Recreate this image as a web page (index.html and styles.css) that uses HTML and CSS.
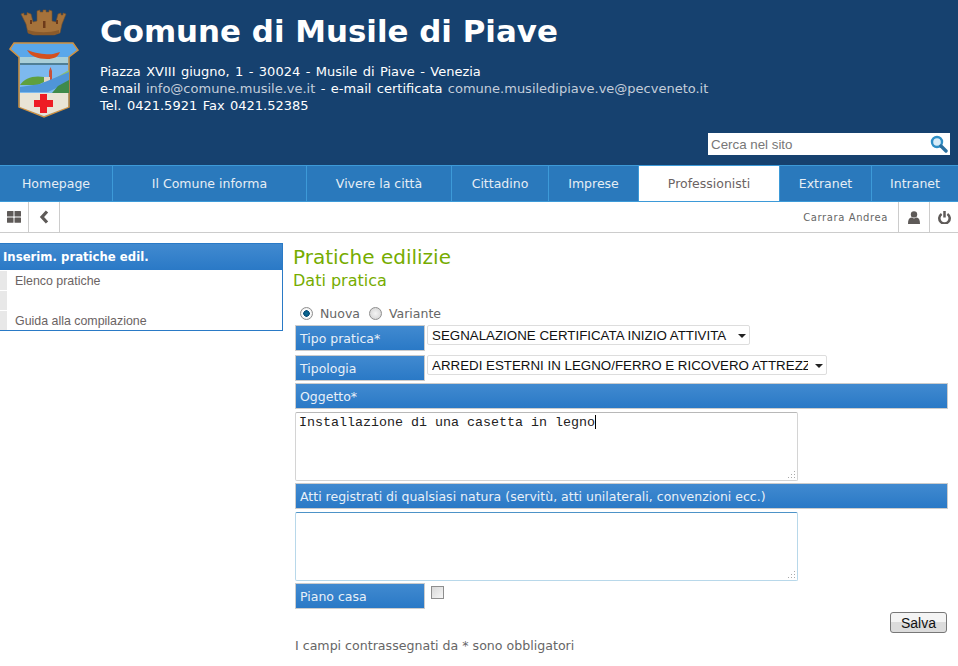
FILE: index.html
```html
<!DOCTYPE html>
<html lang="it">

<head>
  <meta charset="utf-8">
  <title>Comune di Musile di Piave</title>
  <link rel="stylesheet" href="styles.css">
</head>

<body>
  <div class="header">
    <svg class="stemma" width="80" height="120" viewBox="0 0 80 120" aria-label="Stemma">
      <!-- corona -->
      <path d="M21 14l3-1v2h3v-2.500l4 1.500 2 8 4-1V11l3-1v2h3v-2h3v2h3v-2l3 1v10l4 1 2-8 3-1v2h2v-2l3 1-4 10-2 9-6 2H34l-6-2-2-9z" fill="#a5723b" stroke="#7a5026" stroke-width=".6"/>
      <path d="M28 30c10 3 21 3 31 0v3l-5 2H34l-6-2z" fill="#8a5a2b"/>
      <rect x="43" y="21" width="2.500" height="7" fill="#6d3a1a"/>
      <rect x="30" y="20" width="2" height="4" fill="#6d3a1a"/>
      <rect x="56" y="20" width="2" height="4" fill="#6d3a1a"/>
      <!-- scudo -->
      <path d="M10 49l4-6h59l5 7-9 7v50l-25 10-25-10V57z" fill="#5aa7ea" stroke="#d2923f" stroke-width="1.500"/>
      <path d="M20 57h48v6H20z" fill="#a9cfd8"/>
      <path d="M27 50c10 4 22 5 26 4l7-2c-2 5-6 7-13 7-9 0-17-3-20-9z" fill="#d5501e"/>
      <path d="M20 63h48v2H20z" fill="#4f7f96"/>
      <path d="M20 65h48v28H20z" fill="#7db9ee"/>
      <path d="M49 80V71l1.500-4 1.500 4v9z" fill="#c9503a"/>
      <path d="M44 77h6v5h-6z" fill="#e2d6c6"/>
      <path d="M20 85c4-7 14-10 24-8v5l-6 3z" fill="#5fa03f"/>
      <path d="M52 80l17-10v10l-12 4z" fill="#8fbf6a"/>
      <path d="M20 87l20-3 29-12v10L48 92H20z" fill="#4f95d8"/>
      <path d="M58 86l11-6v13H52z" fill="#3f8a4a"/>
      <path d="M20 93h48v14l-24 9-24-9z" fill="#e9e4d6"/>
      <path d="M40 94h7v6h6v7h-6v6h-7v-6h-6v-7h6z" fill="#ee1c25"/>
    </svg>
    <div class="intestazione">
      <h1>Comune di Musile di Piave</h1>
      <p>Piazza XVIII giugno, 1 - 30024 - Musile di Piave - Venezia<br>
        e-mail <a href="#">info@comune.musile.ve.it</a> - e-mail certificata <a href="#">comune.musiledipiave.ve@pecveneto.it</a><br>
        Tel. 0421.5921 Fax 0421.52385</p>
    </div>
    <div class="cerca">
      <input type="text" placeholder="Cerca nel sito">
      <svg width="18" height="18" viewBox="0 0 18 18">
        <circle cx="7" cy="7" r="5" fill="#d8ecf8" stroke="#2f8fc6" stroke-width="2.400"/>
        <path d="M11 11l5 5" stroke="#2a6f9f" stroke-width="3.400" stroke-linecap="round"/>
      </svg>
    </div>
  </div>

  <div class="nav">
    <a href="#">Homepage</a>
    <a href="#">Il Comune informa</a>
    <a href="#">Vivere la città</a>
    <a href="#">Cittadino</a>
    <a href="#">Imprese</a>
    <a href="#" class="attivo">Professionisti</a>
    <a href="#">Extranet</a>
    <a href="#">Intranet</a>
  </div>

  <div class="toolbar">
    <span class="tool">
      <svg width="14" height="12" viewBox="0 0 14 12" fill="#5e5a58">
        <rect x="0" y="0" width="6.500" height="5.400" rx=".5"/>
        <rect x="7.500" y="0" width="6.500" height="5.400" rx=".5"/>
        <rect x="0" y="6.400" width="6.500" height="5.400" rx=".5"/>
        <rect x="7.500" y="6.400" width="6.500" height="5.400" rx=".5"/>
      </svg>
    </span>
    <span class="tool largo">
      <svg width="10" height="14" viewBox="0 0 10 14"><path d="M8 1.500L3 7l5 5.500" fill="none" stroke="#5e5a58" stroke-width="3.200"/></svg>
    </span>
    <span class="utente">Carrara Andrea</span>
    <span class="tool destra">
      <svg width="12" height="13" viewBox="0 0 12 13" fill="#5e5a58">
        <circle cx="6" cy="3.400" r="3.200"/>
        <path d="M0 13c0-4 1-6.200 3.500-6.500l2.500 1 2.500-1C11 6.800 12 9 12 13z"/>
      </svg>
    </span>
    <span class="tool destra ultimo">
      <svg width="13" height="13" viewBox="0 0 13 13" fill="none" stroke="#5e5a58" stroke-width="2.500">
        <path d="M3.600 3a5.200 5.200 0 1 0 5.800 0"/>
        <path d="M6.500 0v6.500"/>
      </svg>
    </span>
  </div>

  <div class="contenuto">
    <div class="menu">
      <div class="menu-titolo">Inserim. pratiche edil.</div>
      <a href="#">Elenco pratiche</a>
      <a href="#"></a>
      <a href="#">Guida alla compilazione</a>
    </div>

    <div class="pagina">
      <h2>Pratiche edilizie</h2>
      <h3>Dati pratica</h3>

      <div class="scelta">
        <input type="radio" name="tipo" checked> <span>Nuova</span>
        <input type="radio" name="tipo"> <span>Variante</span>
      </div>

      <div class="riga">
        <label class="etichetta">Tipo pratica*</label>
        <div class="sel sel-corta">
          <select><option>SEGNALAZIONE CERTIFICATA INIZIO ATTIVITA</option></select>
        </div>
      </div>
      <div class="riga">
        <label class="etichetta">Tipologia</label>
        <div class="sel sel-lunga">
          <select><option>ARREDI ESTERNI IN LEGNO/FERRO E RICOVERO ATTREZZI</option></select>
        </div>
      </div>

      <div class="barra">Oggetto*</div>
      <div class="area">
        <textarea>Installazione di una casetta in legno</textarea>
        <span class="cursore"></span>
      </div>

      <div class="barra">Atti registrati di qualsiasi natura (servitù, atti unilaterali, convenzioni ecc.)</div>
      <div class="area">
        <textarea class="fuoco"></textarea>
      </div>

      <div class="riga">
        <label class="etichetta">Piano casa</label>
        <input type="checkbox" class="spunta">
      </div>

      <div class="azioni"><button>Salva</button></div>
      <p class="nota">I campi contrassegnati da * sono obbligatori</p>
    </div>
  </div>
</body>

</html>
```

FILE: styles.css
```css
html, body {
  margin: 0;
  height: 666px;
  overflow: hidden;
}

body {
  background-color: #fff;
  color: #666;
  font-family: "DejaVu Sans", sans-serif;
  font-size: 12px;
}

.header {
  display: flex;
  position: relative;
  height: 165px;
  background-color: #16416f;
}

.stemma {
  flex: none;
}

.intestazione {
  margin-left: 20px;
  color: #fff;
}

.intestazione h1 {
  margin: 14px 0 0 0;
  font-size: 30.900px;
  line-height: 34px;
  font-weight: bold;
}

.intestazione p {
  margin: 15px 0 0 0;
  font-size: 13px;
  word-spacing: 1.300px;
  line-height: 17px;
}

.intestazione a {
  color: #c4cedb;
  text-decoration: none;
}

.cerca {
  position: absolute;
  left: 708px;
  top: 133px;
  display: flex;
  align-items: center;
  width: 242px;
  height: 22px;
  background-color: #fff;
}

.cerca input {
  flex: 1;
  min-width: 0;
  border: 0;
  outline: 0;
  padding: 0 0 0 3px;
  background: none;
  font-family: "Liberation Sans", sans-serif;
  font-size: 13.330px;
}

.cerca input::placeholder {
  color: #777;
  opacity: 1;
}

.cerca svg {
  margin-right: 2px;
}

.nav {
  display: grid;
  grid-template-columns: 113px 194px 145px 97px 90px 141px 92px 86px;
  height: 37px;
  box-sizing: border-box;
  border-top: 1px solid #3d9ad8;
  border-bottom: 1px solid #3d9ad8;
  background-color: #2a79bc;
}

.nav a {
  border-right: 1px solid #3d9ad8;
  color: #e6eef5;
  font-size: 12.500px;
  line-height: 35px;
  text-align: center;
  text-decoration: none;
}

.nav a:last-child {
  border-right: 0;
}

.nav a.attivo {
  background-color: #fff;
  color: #6b6363;
}

.toolbar {
  display: flex;
  align-items: stretch;
  height: 31px;
  box-sizing: border-box;
  border-bottom: 1px solid #ccc;
}

.tool {
  display: flex;
  align-items: center;
  justify-content: center;
  width: 28px;
  border-right: 1px solid #ccc;
}

.tool.largo {
  width: 30px;
}

.tool.destra {
  width: 30px;
  border-right: 0;
  border-left: 1px solid #ccc;
}

.tool.ultimo {
  width: 28px;
}

.utente {
  margin-left: auto;
  padding-right: 10px;
  font-size: 10px;
  letter-spacing: .6px;
  line-height: 31px;
}

.contenuto {
  display: flex;
  align-items: flex-start;
  padding-top: 10px;
}

.menu {
  width: 283px;
  box-sizing: border-box;
  border: 1px solid #2a7ac6;
  border-left: 0;
  flex: none;
}

.menu-titolo {
  height: 26px;
  padding-left: 3px;
  background: linear-gradient(#418ad0, #2a79c6);
  color: #fff;
  font-size: 11.700px;
  font-weight: bold;
  line-height: 26px;
}

.menu a {
  display: block;
  height: 19px;
  margin-top: 1px;
  padding-left: 15px;
  background: linear-gradient(90deg, #e8e8e8 7px, #fff 7px);
  color: #6b6363;
  font-family: "Liberation Sans", sans-serif;
  font-size: 12.400px;
  line-height: 21px;
  text-decoration: none;
}

.pagina {
  flex: 1;
  padding: 2px 10px 0 10px;
}

.pagina h2 {
  margin: 0;
  color: #76ac00;
  font-size: 20px;
  font-weight: normal;
  line-height: 24px;
}

.pagina h3 {
  margin: 1px 0 0 0;
  color: #76ac00;
  font-size: 16px;
  font-weight: normal;
  line-height: 22px;
}

.scelta {
  display: flex;
  align-items: center;
  height: 17px;
  margin: 13px 0 0 7px;
  font-size: 12.500px;
}

.scelta span {
  margin: 0 9px 0 7px;
}

.scelta input {
  appearance: none;
  width: 13px;
  height: 13px;
  margin: 0;
  border: 1px solid #8e8e8e;
  border-radius: 50%;
  background: radial-gradient(#f4f4f4, #cfcfcf);
}

.scelta input:checked {
  background: radial-gradient(circle, #0b6f98 0, #0a4f7a 3px, #fff 3.500px, #dcdcdc 100%);
}

.riga {
  display: flex;
  align-items: flex-start;
  gap: 2px;
  margin: 3px 0 0 2px;
}

.riga + .riga {
  margin-top: 4px;
}

.area + .riga {
  margin-top: 2px;
}

.etichetta {
  width: 130px;
  height: 26px;
  box-sizing: border-box;
  border: 1px solid #ccc;
  padding-left: 4px;
  background: linear-gradient(#418ad0, #2a79c6);
  color: #e8f0f8;
  font-size: 12.500px;
  line-height: 26px;
}

.sel {
  position: relative;
  height: 20px;
}

.sel-corta {
  width: 323px;
}

.sel-lunga {
  width: 400px;
}

.sel::after {
  content: "";
  position: absolute;
  right: 4px;
  top: 9px;
  border: 4px solid transparent;
  border-top-color: #222;
  border-bottom: 0;
}

.sel select {
  appearance: none;
  width: 100%;
  height: 20px;
  border: 1px solid #ddd;
  border-radius: 2px;
  padding: 0 18px 0 4px;
  background-color: #fff;
  color: #111;
  font-family: "Liberation Sans", sans-serif;
  font-size: 13.330px;
}

.barra {
  height: 26px;
  box-sizing: border-box;
  margin: 2px 0 0 2px;
  border: 1px solid #ccc;
  padding-left: 4px;
  background: linear-gradient(#418ad0, #2a79c6);
  color: #e8f0f8;
  font-size: 12.500px;
  line-height: 26px;
}

.area {
  position: relative;
  width: 503px;
  height: 69px;
  margin: 3px 0 2px 2px;
}

/* puntini del ridimensionamento */
.area::after {
  content: "";
  position: absolute;
  right: 3px;
  bottom: 3px;
  width: 1px;
  height: 1px;
  background-color: #aaa;
  box-shadow: -3px 0 #aaa, -6px 0 #aaa, 0 -3px #aaa, -3px -3px #aaa, 0 -6px #aaa;
}

.area textarea {
  display: block;
  width: 100%;
  height: 100%;
  box-sizing: border-box;
  margin: 0;
  border: 1px solid #d4d4d4;
  border-top-color: #b8b8b8;
  border-radius: 2px;
  outline: 0;
  padding: 2px 3px;
  resize: none;
  color: #222;
  font-family: "Liberation Mono", monospace;
  font-size: 13.333px;
}

.area textarea.fuoco {
  border-color: #b8d8ea;
  border-top-color: #4d93c8;
}

.cursore {
  position: absolute;
  left: 300px;
  top: 3px;
  width: 1px;
  height: 14px;
  background-color: #000;
}

.spunta {
  appearance: none;
  width: 13px;
  height: 13px;
  margin: 3px 0 0 4px;
  border: 1px solid #8e8e8e;
  background: linear-gradient(135deg, #d8d8d8, #f6f6f6);
}

.azioni {
  display: flex;
  justify-content: flex-end;
  margin: 3px 0 0 0;
}

.azioni button {
  width: 57px;
  height: 21px;
  margin-right: 1px;
  border: 1px solid #777;
  border-radius: 3px;
  padding: 0;
  background: linear-gradient(#f4f4f4 50%, #dcdcdc 50%);
  color: #111;
  font-family: "Liberation Sans", sans-serif;
  font-size: 14px;
}

.nota {
  margin: 5px 0 0 2px;
  font-size: 12.600px;
  line-height: 16px;
}
```
